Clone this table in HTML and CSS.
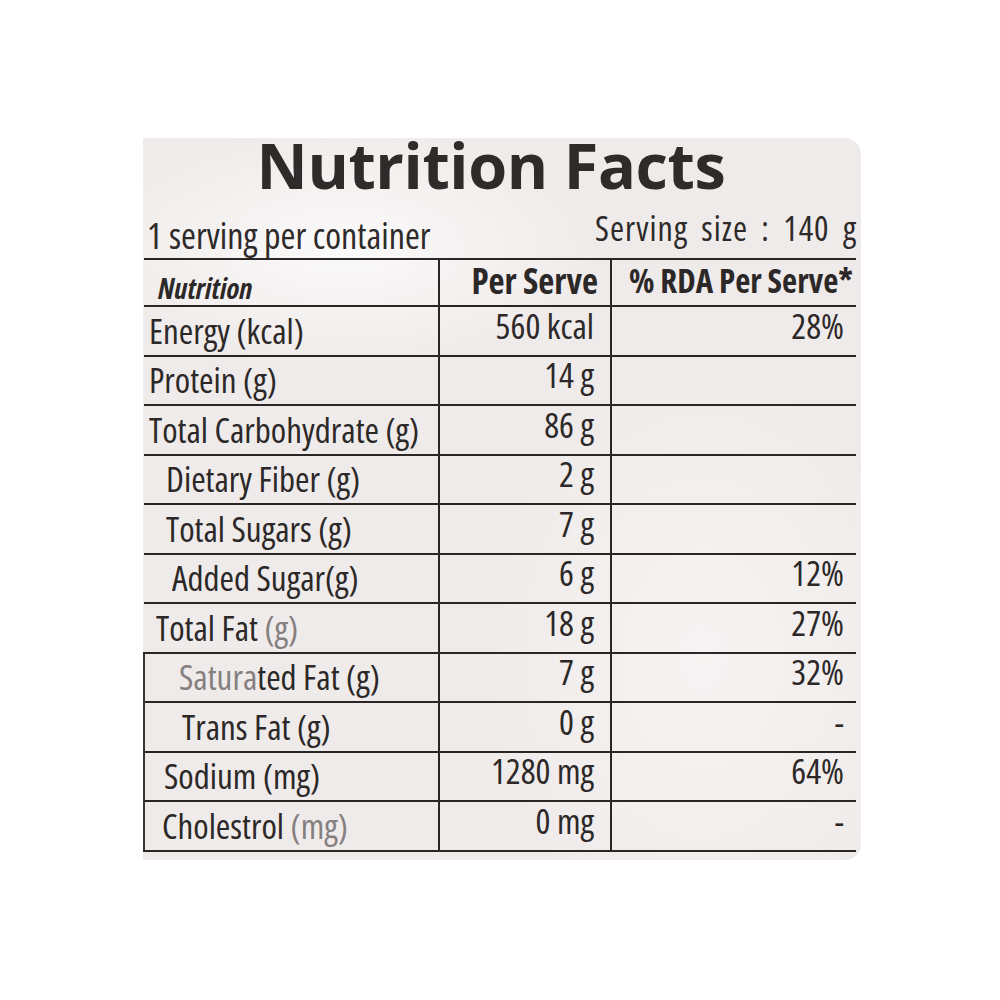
FILE: index.html
```html
<!DOCTYPE html>
<html>
<head>
<meta charset="utf-8">
<link rel="stylesheet" href="styles.css">
</head>
<body>
<div class="page">
  <div class="label">
    <h1 class="title">Nutrition Facts</h1>
    <div class="serving">
      <span class="per-container">1 serving per container</span>
      <span class="size">Serving size : 140 g</span>
    </div>
    <table class="facts">
      <colgroup>
        <col class="c-name">
        <col class="c-serve">
        <col class="c-rda">
      </colgroup>
      <thead>
        <tr>
          <th class="h-name">Nutrition</th>
          <th class="h-num">Per Serve</th>
          <th class="h-num h-rda">% RDA Per Serve*</th>
        </tr>
      </thead>
      <tbody>
        <tr><td class="name">Energy (kcal)</td><td class="num">560 kcal</td><td class="rda">28%</td></tr>
        <tr><td class="name">Protein (g)</td><td class="num">14 g</td><td class="rda"></td></tr>
        <tr><td class="name">Total Carbohydrate (g)</td><td class="num">86 g</td><td class="rda"></td></tr>
        <tr><td class="name in1">Dietary Fiber (g)</td><td class="num">2 g</td><td class="rda"></td></tr>
        <tr><td class="name in1">Total Sugars (g)</td><td class="num">7 g</td><td class="rda"></td></tr>
        <tr><td class="name in2">Added Sugar(g)</td><td class="num">6 g</td><td class="rda">12%</td></tr>
        <tr><td class="name in-fat">Total Fat <span class="faint">(g)</span></td><td class="num">18 g</td><td class="rda">27%</td></tr>
        <tr class="edge"><td class="name in3"><span class="faint">Satura</span>ted Fat (g)</td><td class="num">7 g</td><td class="rda">32%</td></tr>
        <tr class="edge"><td class="name in4">Trans Fat (g)</td><td class="num">0 g</td><td class="rda">-</td></tr>
        <tr class="edge"><td class="name in-na">Sodium (mg)</td><td class="num">1280 mg</td><td class="rda">64%</td></tr>
        <tr class="edge last"><td class="name in-ch">Cholestrol <span class="faint">(mg)</span></td><td class="num">0 mg</td><td class="rda">-</td></tr>
      </tbody>
    </table>
  </div>
</div>
</body>
</html>
```
FILE: styles.css
```css
html, body {
  margin: 0;
  padding: 0;
  background: #ffffff;
}

.page {
  padding: 138px 0 0 143px;
}

.label {
  width: 718px;
  height: 722px;
  box-sizing: border-box;
  background:
    radial-gradient(ellipse 260px 120px at 200px 110px, rgba(255,255,255,0.75), rgba(255,255,255,0) 100%),
    radial-gradient(ellipse 220px 300px at 560px 520px, rgba(255,255,255,0.45), rgba(255,255,255,0) 100%),
    #efebea;
  border-radius: 2px 16px 16px 0;
  color: #2c2828;
  font-family: "Open Sans", "Noto Sans", sans-serif;
  font-stretch: 75%;
}

.title {
  margin: 0;
  padding: 0 22px 0 0;
  font-size: 63px;
  line-height: 54px;
  font-weight: 700;
  font-stretch: 100%;
  letter-spacing: -0.4px;
  text-align: center;
  color: #2f2b2b;
}

.serving {
  display: flex;
  justify-content: space-between;
  align-items: flex-end;
  height: 66px;
  padding: 0 4px 0 4px;
  color: #2e2a2a;
}

.per-container {
  font-size: 36px;
  line-height: 40px;
  padding-bottom: 2px;
}

.size {
  font-size: 34px;
  line-height: 30px;
  font-stretch: 85%;
  letter-spacing: 1px;
  word-spacing: 6px;
  padding-bottom: 15px;
}

.facts {
  width: 712px;
  border-collapse: collapse;
  table-layout: fixed;
}

.c-name { width: 295px; }
.c-serve { width: 172px; }
.c-rda { width: 245px; }

.facts th,
.facts td {
  padding: 0;
  vertical-align: middle;
  border-top: 2px solid #2a2626;
  font-size: 35px;
  line-height: 30px;
  white-space: nowrap;
}

.facts th + th,
.facts td + td {
  border-left: 2px solid #2a2626;
}

.facts thead tr {
  height: 47px;
}

.facts tbody tr {
  height: 49.5px;
}

.facts .h-name {
  text-align: left;
  padding: 10px 0 0 14px;
  font-size: 29px;
  font-stretch: 87.5%;
  font-style: italic;
  font-weight: 700;
}

.facts .h-num {
  text-align: right;
  padding: 0 12px 4px 0;
  font-weight: 700;
  font-size: 35px;
  font-stretch: 80%;
}

.facts .h-rda {
  padding-right: 3px;
  font-size: 33px;
  font-stretch: 75%;
}

.facts .name {
  text-align: left;
  padding-left: 5px;
}

.facts .in1 { padding-left: 22px; }
.facts .in2 { padding-left: 28px; }
.facts .in3 { padding-left: 34px; }
.facts .in4 { padding-left: 37px; }
.facts .in-fat { padding-left: 12px; }
.facts .in-na { padding-left: 19px; }
.facts .in-ch { padding-left: 17px; }

.facts .num {
  text-align: right;
  padding: 0 16px 10px 0;
}

.facts .rda {
  text-align: right;
  padding: 0 12px 10px 0;
}

.faint {
  color: #857f7f;
}

.facts tr.edge td:first-child {
  border-left: 2px solid #3a3535;
}

.facts tr.last td {
  border-bottom: 2px solid #2a2626;
}
```
